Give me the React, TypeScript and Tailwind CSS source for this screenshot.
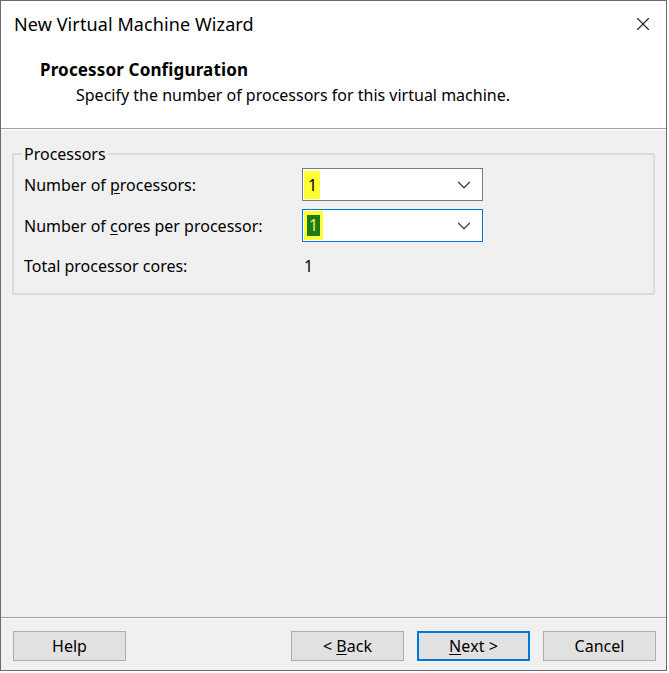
import { X, ChevronDown } from "lucide-react";

const font = { fontFamily: '"Noto Sans", "Open Sans", sans-serif' };

function Combo({ focused }: { focused?: boolean }) {
    return (
        <div
            className={`w-[181px] h-[33px] bg-white flex items-center justify-between pl-[1px] pr-[7px] border ${
                focused ? "border-[#0078d7]" : "border-[#7a7a7a]"
            }`}
        >
            {focused ? (
                <div className="h-[29px] w-[19px] bg-[#ffff33] flex items-center justify-center">
                    <span className="bg-[#1e7b12] text-[#e8f060] leading-[21px] px-[2px]">1</span>
                </div>
            ) : (
                <div className="h-[28px] w-[16px] bg-[#ffff33] flex items-center pl-[4px]">
                    <span>1</span>
                </div>
            )}
            <ChevronDown size={22} strokeWidth={1.4} className="text-[#444]" />
        </div>
    );
}

function Button({ label, ul, primary }: { label: string; ul?: number; primary?: boolean }) {
    const chars = label.split("");
    return (
        <button
            className={`w-[113px] h-[30px] bg-[#e1e1e1] text-[16px] text-black flex items-center justify-center ${
                primary ? "border-2 border-[#0078d7]" : "border border-[#adadad]"
            }`}
        >
            {chars.map((c, i) => (
                <span key={i} className={i === ul ? "underline underline-offset-2" : ""}>
                    {c === " " ? "\u00a0" : c}
                </span>
            ))}
        </button>
    );
}

export default function App() {
    return (
        <div className="w-[669px] h-[673px] bg-white text-black" style={font}>
            <div className="w-[667px] h-[671px] border border-[#6b6b6b] flex flex-col">
                <div className="bg-white h-[127px] flex flex-col">
                    <div className="h-[46px] flex items-center justify-between pl-[13px] pr-[12px]">
                        <span className="text-[18px] tracking-[0.1px]">New Virtual Machine Wizard</span>
                        <X size={22} strokeWidth={1.2} className="text-[#222]" />
                    </div>
                    <div className="pl-[39px] pt-[10px] flex flex-col">
                        <span className="text-[17px] font-bold leading-[25px] tracking-[0.15px]">
                            Processor Configuration
                        </span>
                        <span className="text-[16px] leading-[26px] pl-[36px]">
                            Specify the number of processors for this virtual machine.
                        </span>
                    </div>
                </div>
                <div className="h-[2px] bg-[#a0a0a0] border-b border-white" />
                <div className="flex-1 bg-[#f0f0f0] flex flex-col">
                    <div className="flex-1 px-[11px] pt-[14px]">
                        <fieldset className="border-2 border-[#dcdcdc] h-[151px]">
                            <legend className="text-[16px] ml-[8px] px-[2px] leading-[20px]">Processors</legend>
                            <div className="grid grid-cols-[278px_181px] gap-y-[8px] text-[16px] items-center pt-[4px] pl-[10px]">
                                <span>
                                    Number of <span className="underline underline-offset-2">p</span>rocessors:
                                </span>
                                <Combo />
                                <span>
                                    Number of <span className="underline underline-offset-2">c</span>ores per processor:
                                </span>
                                <Combo focused />
                                <span className="h-[32px] flex items-center">Total processor cores:</span>
                                <span className="pl-[2px]">1</span>
                            </div>
                        </fieldset>
                    </div>
                    <div className="h-[1px] bg-[#a0a0a0]" />
                    <div className="h-[1px] bg-white" />
                    <div className="h-[51px] flex items-start pl-[12px] pr-[10px] pt-[12px]">
                        <Button label="Help" />
                        <div className="flex-1" />
                        <div className="flex gap-[13px]">
                            <Button label="< Back" ul={2} />
                            <Button label="Next >" ul={0} primary />
                            <Button label="Cancel" />
                        </div>
                    </div>
                </div>
            </div>
        </div>
    );
}
